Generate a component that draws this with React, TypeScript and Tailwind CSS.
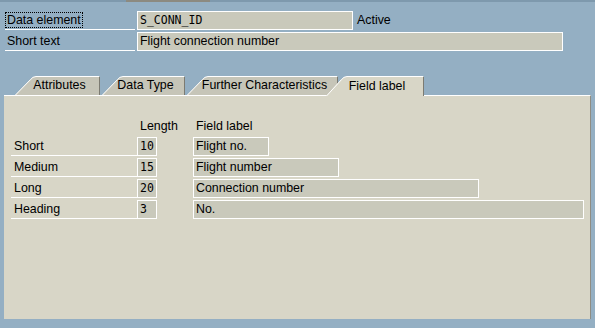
import React from 'react'

const font = { fontFamily: '"Liberation Sans", Arial, sans-serif' }
const mono = { fontFamily: '"DejaVu Sans Mono", "Liberation Mono", monospace' }

type TabProps = { label: string; width: number; active?: boolean; className?: string }

function Tab({ label, width, active, className = '' }: TabProps) {
  const h = active ? 20 : 19
  return (
    <div
      className={`relative flex items-center justify-center pl-[3px] text-[12.4px] text-black ${active ? 'z-10' : ''} ${className}`}
      style={{ width, height: h }}
    >
      <svg className="absolute inset-0" width={width} height={h}>
        <path
          d={`M0,${h} L15,3.5 Q17.5,0.5 21,0.5 L${width - 1},0.5 L${width - 1},${h} Z`}
          fill={active ? '#d8d6c7' : '#c6c5b8'}
        />
        <path
          d={`M0.5,${h} L15.3,3.8 Q17.8,0.5 21,0.5 L${width - 2},0.5`}
          fill="none"
          stroke="#ffffff"
          strokeWidth="1"
        />
        <line x1={width - 1.5} y1="1" x2={width - 1.5} y2={h} stroke="#7c7b72" strokeWidth="1" />
      </svg>
      <span className="relative">{label}</span>
    </div>
  )
}

const rows = [
  { name: 'Short', len: '10', text: 'Flight no.', w: 76 },
  { name: 'Medium', len: '15', text: 'Flight number', w: 146 },
  { name: 'Long', len: '20', text: 'Connection number', w: 286 },
  { name: 'Heading', len: '3', text: 'No.', w: 391 },
]

export default function App() {
  return (
    <div className="relative h-[328px] w-[595px] overflow-hidden bg-[#94afc3] text-black" style={font}>
      <div className="h-[2px] bg-[#7e99ad]">
        <div className="ml-[126px] h-full w-[84px] bg-[#8c8a80]" />
      </div>

      <div className="mt-[9px] flex flex-col gap-[2px] pl-[5px] text-[12.4px]">
        <div className="flex h-[19px] items-start">
          <div className="flex h-[19px] w-[130px] items-start border-b border-white">
            <div className="mt-[1px] flex h-[16px] items-center border border-dotted border-black pl-[1px] pr-[1px]">
              Data element
            </div>
          </div>
          <div
            className="ml-[2px] flex h-[19px] w-[216px] items-center border border-white bg-[#c9c9bb] pl-[2px] text-[11.5px]"
            style={mono}
          >
            S_CONN_ID
          </div>
          <div className="ml-[4px] flex h-[19px] items-center">Active</div>
        </div>
        <div className="flex h-[19px] items-start">
          <div className="flex h-[19px] w-[130px] items-center border-b border-white pl-[2px]">Short text</div>
          <div className="ml-[2px] flex h-[19px] w-[426px] items-center border border-white bg-[#c9c9bb] pl-[2px]">
            Flight connection number
          </div>
        </div>
      </div>

      <div className="mt-[25px] flex h-[19px] items-start pl-[15px]">
        <Tab label="Attributes" width={86} />
        <Tab label="Data Type" width={84} className="ml-[1px]" />
        <Tab label="Further Characteristics" width={152} className="ml-[1px]" />
        <Tab label="Field label" width={99} active className="-ml-[13px]" />
      </div>

      <div className="ml-[4px] h-[224px] w-[587px] border-t border-r border-t-white border-r-[#8e8d84] bg-[#d8d6c7] pl-[7px] pt-[21px] text-[12.4px]">
        <div className="flex h-[19px] items-center">
          <div className="w-[129px]" />
          <div className="w-[56px]">Length</div>
          <div>Field label</div>
        </div>
        <div className="mt-[1px] flex flex-col gap-[2px]">
          {rows.map((r) => (
            <div key={r.name} className="flex h-[19px] items-start">
              <div className="flex h-[19px] w-[126px] items-center border-b border-white pl-[3px]">{r.name}</div>
              <div
                className="flex h-[19px] w-[20px] items-center border border-white bg-[#c9c9bb] pl-[2px] text-[11.5px]"
                style={mono}
              >
                {r.len}
              </div>
              <div
                className="ml-[36px] flex h-[19px] items-center border border-white bg-[#c9c9bb] pl-[2px]"
                style={{ width: r.w }}
              >
                {r.text}
              </div>
            </div>
          ))}
        </div>
      </div>
    </div>
  )
}
